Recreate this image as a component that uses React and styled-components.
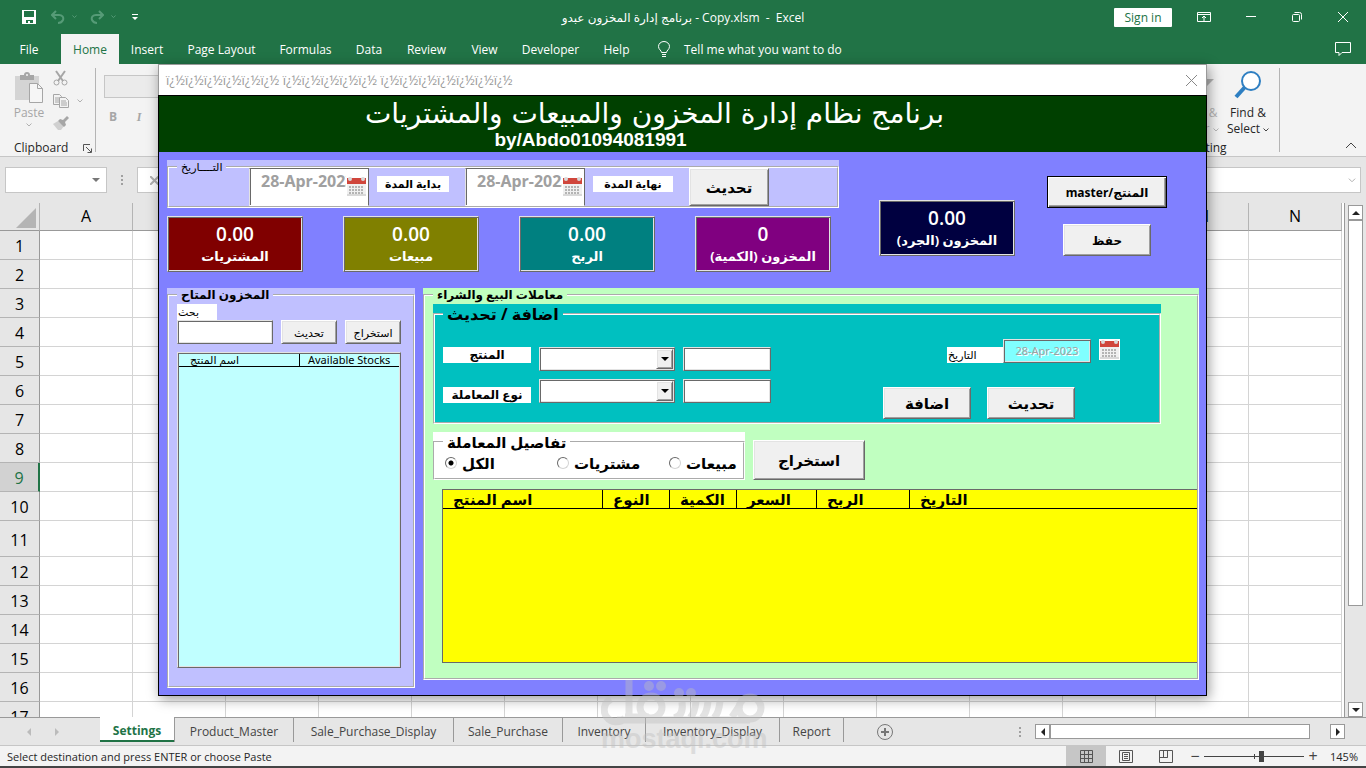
import React, { useState } from "react";
import styled, { createGlobalStyle, css } from "styled-components";

const columns = ["A", "B", "C", "D", "E", "F", "G", "H", "I", "J", "K", "L", "M", "N"];
const rows = Array.from({ length: 17 }, (_, i) => i + 1);

const ribbonTabs = [
  { name: "File", width: 58 },
  { name: "Home", width: 58, active: true },
  { name: "Insert", width: 56 },
  { name: "Page Layout", width: 93 },
  { name: "Formulas", width: 75 },
  { name: "Data", width: 52 },
  { name: "Review", width: 63 },
  { name: "View", width: 53 },
  { name: "Developer", width: 79 },
  { name: "Help", width: 53 },
];

const sheetTabs = [
  { name: "Settings", width: 75, active: true },
  { name: "Product_Master", width: 119 },
  { name: "Sale_Purchase_Display", width: 160 },
  { name: "Sale_Purchase", width: 109 },
  { name: "Inventory", width: 83 },
  { name: "Inventory_Display", width: 134 },
  { name: "Report", width: 64 },
];

const stats = [
  { value: "0.00", label: "المشتريات", color: "#800000" },
  { value: "0.00", label: "مبيعات", color: "#808000" },
  { value: "0.00", label: "الربح", color: "#008080" },
  { value: "0", label: "المخزون (الكمية)", color: "#800080" },
];

const dealColumns = [
  { name: "اسم المنتج", width: 160 },
  { name: "النوع", width: 67 },
  { name: "الكمية", width: 67 },
  { name: "السعر", width: 80 },
  { name: "الربح", width: 93 },
  { name: "التاريخ" },
];

const filters = [
  { id: "all", name: "الكل" },
  { id: "purchases", name: "مشتريات" },
  { id: "sales", name: "مبيعات" },
];

const badTitle = [6, 5, 7].map((n) => "ï¿½".repeat(n)).join(" ");

const CalendarIcon = () => (
  <svg width="21" height="21" viewBox="0 0 21 21" aria-hidden="true">
    <rect width="21" height="21" fill="#fff" />
    <rect x="1" y="8" width="19" height="11" fill="#f0f0f0" />
    <rect x="1" y="18" width="19" height="2" fill="#d9d9d9" />
    <rect x="1" y="2" width="19" height="6" fill="#d0463c" />
    <circle cx="4" cy="3" r="2" fill="#d9d9d9" />
    <circle cx="17" cy="3" r="2" fill="#d9d9d9" />
    {[10, 13, 16].map((y) =>
      [3, 6, 9, 12, 15].map((x) => (
        <rect key={x + "-" + y} x={x} y={y} width="2" height="2" fill="#b4b4b4" />
      ))
    )}
  </svg>
);

const Chevron = ({ color = "#777", up, size = 6 }) => (
  <svg width={size} height={size / 2 + 1} viewBox="0 0 6 4" aria-hidden="true">
    <path
      d={up ? "M0.5 3.5 3 1l2.5 2.5" : "M0.5 0.5 3 3l2.5-2.5"}
      fill="none"
      stroke={color}
      vectorEffect="non-scaling-stroke"
    />
  </svg>
);

const Arrow = ({ dir, color = "#222" }) => {
  const shapes = {
    up: "M0 6h8L4 2z",
    down: "M0 2h8L4 6z",
    left: "M6 0v8L2 4z",
    right: "M2 0v8l4-4z",
  };
  return (
    <svg width="8" height="8" viewBox="0 0 8 8" aria-hidden="true">
      <path d={shapes[dir]} fill={color} />
    </svg>
  );
};

const Combo = ({ id }) => (
  <ComboBox>
    <select id={id} defaultValue="">
      <option value=""></option>
    </select>
    <ComboArrow>
      <Arrow dir="down" color="#000" />
    </ComboArrow>
  </ComboBox>
);

const Stat = ({ value, label, color }) => (
  <StatBox $color={color}>
    <strong>{value}</strong>
    <span dir="rtl">{label}</span>
  </StatBox>
);

const ExcelTop = () => (
  <header>
    <TitleBar>
      <QuickAccess>
        <IconButton aria-label="Save">
          <svg width="14" height="14" viewBox="0 0 14 14">
            <path d="M0 0h14v14H0z" fill="#fff" />
            <path d="M2 1h10v6H2zM4 10h7v3H8v-2H6v2H4z" fill="#217346" />
          </svg>
        </IconButton>
        <IconButton aria-label="Undo" $left={15}>
          <svg width="14" height="14" viewBox="0 0 14 14" fill="none" stroke="#569b77" strokeWidth="2">
            <path d="M5 1 1 5l4 4M1 5h7c3 0 5 2 4 5-1 2-3 3-5 3" />
          </svg>
        </IconButton>
        <IconButton aria-label="Undo history" $left={7}>
          <Chevron color="#569b77" size={5} />
        </IconButton>
        <IconButton aria-label="Redo" $left={13}>
          <svg width="14" height="14" viewBox="0 0 14 14" fill="none" stroke="#569b77" strokeWidth="2">
            <path d="m9 1 4 4-4 4M13 5H6C3 5 1 7 2 10c1 2 3 3 5 3" />
          </svg>
        </IconButton>
        <IconButton aria-label="Redo history" $left={7}>
          <Chevron color="#569b77" size={5} />
        </IconButton>
        <IconButton aria-label="Customize" $left={16}>
          <svg width="6" height="7" viewBox="0 0 6 7" fill="#fff">
            <path d="M0 0h6v1H0zM0 3h6L3 6z" />
          </svg>
        </IconButton>
      </QuickAccess>
      <DocName>برنامج إدارة المخزون عبدو - Copy.xlsm&nbsp; -&nbsp; Excel</DocName>
      <WindowButtons>
        <SignIn>Sign in</SignIn>
        <IconButton aria-label="Ribbon display" $left={25}>
          <svg width="14" height="10" viewBox="0 0 14 10" fill="none" stroke="#fff">
            <path d="M.5.5h13v9H.5zM.5 2.5h13M7 9V4.500M5 6l2-2 2 2" />
          </svg>
        </IconButton>
        <IconButton aria-label="Minimize" $left={35}>
          <svg width="10" height="10" viewBox="0 0 10 10" stroke="#fff">
            <path d="M0 4.500h10" />
          </svg>
        </IconButton>
        <IconButton aria-label="Restore" $left={36}>
          <svg width="10" height="10" viewBox="0 0 10 10" fill="none" stroke="#fff">
            <rect x=".5" y="2.500" width="7" height="7" rx="1" />
            <path d="M2.500.5h5q2 0 2 2v5" />
          </svg>
        </IconButton>
        <IconButton aria-label="Close" $left={36}>
          <svg width="10" height="10" viewBox="0 0 10 10" stroke="#fff">
            <path d="M0 0l10 10M10 0 0 10" />
          </svg>
        </IconButton>
      </WindowButtons>
    </TitleBar>
    <TabBar>
      {ribbonTabs.map((tab) => (
        <RibbonTab key={tab.name} $width={tab.width} $active={tab.active}>
          {tab.name}
        </RibbonTab>
      ))}
      <TellMe>
        <svg width="12" height="16" viewBox="0 0 12 16" fill="none" stroke="#fff">
          <path d="M3.500 11.500c0-2-3-3-3-6a5.500 5 0 0 1 11 0c0 3-3 4-3 6zM4 13.500h4M4 15.500h4" />
        </svg>
        Tell me what you want to do
      </TellMe>
      <IconButton aria-label="Comments">
        <svg width="16" height="15" viewBox="0 0 16 15" fill="none" stroke="#fff">
          <path d="M.5.5h15v10H7l-3 3v-3H.5z" />
        </svg>
      </IconButton>
    </TabBar>
    <Ribbon>
      <ClipboardGroup>
        <GroupBody>
          <PasteButton>
            <svg width="28" height="31" viewBox="0 0 28 31">
              <path d="M0 4h24v24H0z" fill="#d4d4d4" />
              <path d="M5 8V3h4a3 3 0 0 1 6 0h4v5z" fill="#a6a6a6" />
              <circle cx="12" cy="3" r="1" fill="#f3f3f3" />
              <path d="M14.500 11.500h8l5 5v14h-13z" fill="#f6f6f6" stroke="#a6a6a6" />
              <path d="M22.500 11.500v5h5" fill="none" stroke="#a6a6a6" />
            </svg>
            Paste
            <Chevron color="#b0b0b0" />
          </PasteButton>
          <ClipTools>
            <IconButton aria-label="Cut">
              <svg width="15" height="16" viewBox="0 0 15 16" fill="none" stroke="#a6a6a6">
                <path d="M3 1l7 10M12 1 5 11" strokeWidth="2" />
                <circle cx="3.500" cy="12.500" r="2.500" />
                <circle cx="11.500" cy="12.500" r="2.500" />
              </svg>
            </IconButton>
            <CopyRow>
              <IconButton aria-label="Copy">
                <svg width="16" height="14" viewBox="0 0 16 14" fill="#f3f3f3" stroke="#a6a6a6">
                  <path d="M.5.5h6l2 2v8h-8zM2 4h4M2 6h4M2 8h4" />
                  <path d="M6.500 3.500h6l3 3v7h-9zM8 7h5M8 9h6M8 11h6" />
                </svg>
              </IconButton>
              <Chevron color="#b0b0b0" />
            </CopyRow>
            <IconButton aria-label="Format painter">
              <svg width="16" height="14" viewBox="0 0 16 14">
                <path d="M0 8l5-3 6 5-3 4H5z" fill="#d0d0d0" />
                <path d="M5 5l2-2 3 1 4-4 2 2-4 4 1 3-2 2z" fill="#a6a6a6" />
              </svg>
            </IconButton>
          </ClipTools>
        </GroupBody>
        <GroupName>
          Clipboard
          <svg width="9" height="9" viewBox="0 0 9 9" fill="none" stroke="#555">
            <path d="M.5 7V.5H7M3 3l5 5M8.500 4.500v4h-4" />
          </svg>
        </GroupName>
      </ClipboardGroup>
      <FontGroup>
        <FontBox aria-label="Font" disabled />
        <div>
          <FontButton disabled>B</FontButton>
          <FontButton disabled $italic>
            I
          </FontButton>
        </div>
      </FontGroup>
      <EditingGroup>
        <EditTools>
          <BigButton $muted>
            <svg width="28" height="28" viewBox="0 0 28 28" fill="#b5b5b5">
              <path d="M8 8h20l-8 8v8h-3v-8z" />
            </svg>
            <span>Sort &amp;</span>
            <span>
              Filter <Chevron color="#b5b5b5" />
            </span>
          </BigButton>
          <BigButton>
            <svg width="28" height="28" viewBox="0 0 28 28">
              <path d="M2 26 11 16" stroke="#2e7fc2" strokeWidth="4" />
              <circle cx="17" cy="10" r="9" fill="#fff" stroke="#2e7fc2" strokeWidth="2" />
            </svg>
            <span>Find &amp;</span>
            <span>
              Select <Chevron color="#444" />
            </span>
          </BigButton>
        </EditTools>
        <EditName>Editing</EditName>
      </EditingGroup>
      <Collapse aria-label="Collapse ribbon">
        <Chevron up color="#444" size={14} />
      </Collapse>
    </Ribbon>
    <FormulaBar>
      <NameBox>
        <input aria-label="Name box" />
        <Arrow dir="down" color="#777" />
      </NameBox>
      <Dots>
        <i />
        <i />
        <i />
      </Dots>
      <FormulaBox>
        <svg width="9" height="9" viewBox="0 0 9 9" stroke="#b0b0b0" strokeWidth="2">
          <path d="M0 0l9 9M9 0 0 9" />
        </svg>
        <input aria-label="Formula" />
        <Chevron color="#b0b0b0" size={8} />
      </FormulaBox>
    </FormulaBar>
  </header>
);

const Sheet = () => (
  <SheetArea>
    <SheetClip>
      <SheetTable>
        <thead>
          <tr>
            <CornerCell>
              <svg width="20" height="20" viewBox="0 0 20 20">
                <path d="M20 0v20H0z" fill="#b4b4b4" />
              </svg>
            </CornerCell>
            {columns.map((c) => (
              <ColHead key={c}>{c}</ColHead>
            ))}
          </tr>
        </thead>
        <tbody>
          {rows.map((r) => (
            <SheetRow key={r} $tall={r === 11}>
              <RowHead $active={r === 9}>{r}</RowHead>
              {columns.map((c) => (
                <Cell key={c} />
              ))}
            </SheetRow>
          ))}
        </tbody>
      </SheetTable>
    </SheetClip>
    <VScroll>
      <ScrollButton aria-label="Scroll up">
        <Arrow dir="up" />
      </ScrollButton>
      <VThumb />
      <ScrollButton aria-label="Scroll down">
        <Arrow dir="down" />
      </ScrollButton>
    </VScroll>
  </SheetArea>
);

const ExcelBottom = () => (
  <footer>
    <SheetTabs>
      <TabArrows>
        <Arrow dir="left" color="#bbb" />
        <Arrow dir="right" color="#bbb" />
      </TabArrows>
      {sheetTabs.map((tab) => (
        <SheetTab key={tab.name} $width={tab.width} $active={tab.active}>
          {tab.name}
        </SheetTab>
      ))}
      <AddSheet aria-label="New sheet">
        <svg width="16" height="16" viewBox="0 0 16 16" fill="none" stroke="#777">
          <circle cx="8" cy="8" r="7.500" />
          <path d="M8 4v8M4 8h8" strokeWidth="2" />
        </svg>
      </AddSheet>
      <Dots>
        <i />
        <i />
        <i />
      </Dots>
      <HScroll>
        <ScrollButton aria-label="Scroll left">
          <Arrow dir="left" />
        </ScrollButton>
        <HThumb />
        <ScrollButton aria-label="Scroll right">
          <Arrow dir="right" />
        </ScrollButton>
      </HScroll>
    </SheetTabs>
    <StatusBar>
      <StatusText>Select destination and press ENTER or choose Paste</StatusText>
      <ViewButton aria-label="Normal" $active>
        <svg width="13" height="13" viewBox="0 0 13 13" fill="none" stroke="#555">
          <path d="M.5.5h12v12H.5zM4.500 0v13M8.500 0v13M0 4.500h13M0 8.500h13" />
        </svg>
      </ViewButton>
      <ViewButton aria-label="Page layout">
        <svg width="14" height="13" viewBox="0 0 14 13" fill="none" stroke="#555">
          <path d="M.5.5h13v12H.5zM3.500 2.500h7v8h-7zM5 4.500h4M5 6.500h4M5 8.500h4" />
        </svg>
      </ViewButton>
      <ViewButton aria-label="Page break">
        <svg width="14" height="13" viewBox="0 0 14 13" fill="none" stroke="#555">
          <path d="M.5.5h13v12H.5zM4.500.5v7h4v-7M.5 7.500h8" />
        </svg>
      </ViewButton>
      <ZoomButton>−</ZoomButton>
      <ZoomRange type="range" aria-label="Zoom" defaultValue="58" />
      <ZoomButton>+</ZoomButton>
      <ZoomValue>145%</ZoomValue>
    </StatusBar>
  </footer>
);

const Inventory = () => {
  const [filter, setFilter] = useState("all");

  return (
    <Dialog role="dialog" aria-label="Inventory">
      <DialogTitle>
        <span>{badTitle}</span>
        <IconButton aria-label="Close form">
          <svg width="11" height="11" viewBox="0 0 11 11" stroke="#888">
            <path d="M0 0l11 11M11 0 0 11" />
          </svg>
        </IconButton>
      </DialogTitle>
      <DialogBody>
        <Banner>
          <h1 dir="rtl">برنامج نظام إدارة المخزون والمبيعات والمشتريات</h1>
          <p>by/Abdo01094081991</p>
        </Banner>
        <TopArea>
          <div>
            <Panel $color="#c0c0ff">
              <DateFrame>
                <legend>التــــاريخ</legend>
                <DateRow>
                  <DateField>
                    <input id="from" defaultValue="28-Apr-2023" readOnly />
                    <CalendarIcon />
                  </DateField>
                  <Tag htmlFor="from" $width={72} $top>
                    بداية المدة
                  </Tag>
                  <DateField $gap>
                    <input id="to" defaultValue="28-Apr-2023" readOnly />
                    <CalendarIcon />
                  </DateField>
                  <Tag htmlFor="to" $width={80} $top>
                    نهاية المدة
                  </Tag>
                  <FrameButton>تحديث</FrameButton>
                </DateRow>
              </DateFrame>
            </Panel>
            <StatRow>
              {stats.map((s) => (
                <Stat key={s.label} {...s} />
              ))}
            </StatRow>
          </div>
          <CountStat>
            <Stat value="0.00" label="المخزون (الجرد)" color="#000040" />
          </CountStat>
          <SideButtons>
            <MasterButton $width={120} $height={32} $size={12}>
              master/المنتج
            </MasterButton>
            <FormButton $width={88} $height={32} $size={12}>
              حفظ
            </FormButton>
          </SideButtons>
        </TopArea>
        <BottomArea>
          <Panel $color="#c0c0ff">
            <StockFrame>
              <legend>المخزون المتاح</legend>
              <SearchLabel htmlFor="search">بحث</SearchLabel>
              <SearchRow>
                <TextBox id="search" $width={96} />
                <FormButton $width={56} $height={24} $size={11} $plain>
                  تحديث
                </FormButton>
                <FormButton $width={56} $height={24} $size={11} $plain>
                  استخراج
                </FormButton>
              </SearchRow>
              <StockList>
                <table>
                  <thead>
                    <tr>
                      <th>اسم المنتج</th>
                      <th>Available Stocks</th>
                    </tr>
                  </thead>
                </table>
              </StockList>
            </StockFrame>
          </Panel>
          <DealPanel $color="#c0ffc0">
            <DealFrame>
              <legend>معاملات البيع والشراء</legend>
              <EditPanel $color="#00c0c0">
                <EditFrame>
                  <legend>اضافة / تحديث</legend>
                  <EditRow>
                    <EditGrid>
                      <Tag htmlFor="product" $width={88}>
                        المنتج
                      </Tag>
                      <Combo id="product" />
                      <TextBox aria-label="المنتج" $width={88} />
                      <Tag htmlFor="kind" $width={88} $end>
                        نوع المعاملة
                      </Tag>
                      <Combo id="kind" />
                      <TextBox aria-label="نوع المعاملة" $width={88} />
                    </EditGrid>
                    <EditSide>
                      <DealDate>
                        <label htmlFor="date">التاريخ</label>
                        <TextBox id="date" $width={88} $dim defaultValue="28-Apr-2023" readOnly />
                        <CalendarIcon />
                      </DealDate>
                      <ButtonRow>
                        <FormButton $width={88} $height={32} $size={15}>
                          اضافة
                        </FormButton>
                        <FormButton $width={88} $height={32} $size={15}>
                          تحديث
                        </FormButton>
                      </ButtonRow>
                    </EditSide>
                  </EditRow>
                </EditFrame>
              </EditPanel>
              <FilterRow>
                <FilterPanel $color="#fff">
                  <FilterFrame>
                    <legend>تفاصيل المعاملة</legend>
                    <Radios>
                      {filters.map((f) => (
                        <label key={f.id}>
                          <input
                            type="radio"
                            name="filter"
                            checked={filter === f.id}
                            onChange={() => setFilter(f.id)}
                          />
                          {f.name}
                        </label>
                      ))}
                    </Radios>
                  </FilterFrame>
                </FilterPanel>
                <FormButton $width={112} $height={40} $size={15}>
                  استخراج
                </FormButton>
              </FilterRow>
              <DealList>
                <table>
                  <colgroup>
                    {dealColumns.map((c) => (
                      <col key={c.name} width={c.width} />
                    ))}
                  </colgroup>
                  <thead>
                    <tr>
                      {dealColumns.map((c) => (
                        <th key={c.name}>{c.name}</th>
                      ))}
                    </tr>
                  </thead>
                </table>
              </DealList>
            </DealFrame>
          </DealPanel>
        </BottomArea>
      </DialogBody>
    </Dialog>
  );
};

const App = () => (
  <React.Fragment>
    <GlobalStyle />
    <Page>
      <ExcelTop />
      <Sheet />
      <ExcelBottom />
      <Inventory />
      <Watermark aria-hidden="true">
        <svg width="164" height="46" viewBox="0 0 164 46" fill="none" stroke="currentColor" strokeWidth="7">
          <path d="M10 19a12 12 0 1 0 14 19M28 0v36M16 40h133" />
          <path d="M24 37h24M95 21q-1 12-6 17M107 21q-1 12-6 17M119 21q-1 12-6 17M131 37l8-12M81 22q2 14-8 16" />
          <circle cx="50" cy="27" r="11" />
          <circle cx="149" cy="28" r="11" />
          <g fill="currentColor" stroke="none">
            <circle cx="48" cy="6" r="5" />
            <circle cx="60" cy="6" r="5" />
            <circle cx="78" cy="13" r="5" />
            <circle cx="90" cy="13" r="5" />
          </g>
        </svg>
        <span>mostaql.com</span>
      </Watermark>
    </Page>
  </React.Fragment>
);

const ui = `"Open Sans", "DejaVu Sans", sans-serif`;
const form = `"Noto Sans", "DejaVu Sans", sans-serif`;

const GlobalStyle = createGlobalStyle`
  * {
    box-sizing: border-box;
  }
  body {
    margin: 0;
    font-family: ${ui};
    font-size: 12px;
    color: #262626;
  }
  button, input, select {
    font-family: inherit;
    font-size: inherit;
    color: inherit;
    margin: 0;
    padding: 0;
  }
  svg {
    display: block;
    flex: none;
  }
`;

/* two pixel edges of the classic form controls */
const sunken = css`
  border: 1px solid;
  border-color: #e3e3e3 #696969 #696969 #e3e3e3;
  box-shadow: inset 1px 1px 0 #696969, inset -1px -1px 0 #e3e3e3;
`;

const raised = css`
  background: #f0f0f0;
  border: 1px solid;
  border-color: #fff #696969 #696969 #fff;
  box-shadow: inset 1px 1px 0 #e3e3e3, inset -1px -1px 0 #a0a0a0;
`;

const Page = styled.div`
  position: relative;
  display: flex;
  flex-direction: column;
  height: 100vh;
  min-height: 768px;
  overflow: hidden;
  background: #e6e6e6;
`;

const IconButton = styled.button`
  display: flex;
  border: 0;
  background: none;
  margin-left: ${(p) => p.$left || 0}px;
`;

const TitleBar = styled.div`
  display: grid;
  grid-template-columns: 1fr auto 1fr;
  align-items: center;
  height: 34px;
  background: #217346;
  color: #fff;
`;

const QuickAccess = styled.div`
  display: flex;
  align-items: center;
  padding-left: 22px;
`;

const DocName = styled.div`
  font-size: 12px;
`;

const WindowButtons = styled.div`
  display: flex;
  align-items: center;
  justify-content: flex-end;
  padding-right: 18px;
  height: 30px;
`;

const SignIn = styled.button`
  width: 58px;
  height: 19px;
  border: 0;
  border-radius: 1px;
  background: #fff;
  color: #217346;
  font-size: 12px;
`;

const TabBar = styled.nav`
  display: flex;
  align-items: center;
  height: 30px;
  padding-right: 15px;
  background: #217346;
  color: #fff;
`;

const RibbonTab = styled.button`
  width: ${(p) => p.$width}px;
  height: 30px;
  border: 0;
  background: ${(p) => (p.$active ? "#f3f3f3" : "none")};
  color: ${(p) => (p.$active ? "#217346" : "#fff")};
  white-space: nowrap;
  &:first-child {
    margin-right: 3px;
  }
`;

const TellMe = styled.div`
  display: flex;
  align-items: center;
  gap: 14px;
  flex: 1;
  padding-left: 15px;
`;

const Ribbon = styled.div`
  display: flex;
  height: 93px;
  padding: 4px 0;
  background: #f3f3f3;
  border-bottom: 1px solid #c6c6c6;
`;

const ClipboardGroup = styled.div`
  width: 96px;
  border-right: 1px solid #b4b4b4;
`;

const GroupBody = styled.div`
  display: flex;
  gap: 10px;
  height: 70px;
  padding-left: 15px;
`;

const PasteButton = styled.button`
  display: flex;
  flex-direction: column;
  align-items: center;
  width: 28px;
  padding-top: 4px;
  border: 0;
  background: none;
  color: #a6a6a6;
  line-height: 20px;
`;

const ClipTools = styled.div`
  display: flex;
  flex-direction: column;
  gap: 8px;
  padding-top: 2px;
`;

const CopyRow = styled.div`
  display: flex;
  align-items: center;
  gap: 8px;
`;

const GroupName = styled.div`
  display: flex;
  align-items: center;
  justify-content: space-between;
  padding: 2px 3px 0 14px;
  line-height: 16px;
`;

const FontGroup = styled.div`
  flex: 1;
  padding: 7px 0 0 8px;
`;

const FontBox = styled.input`
  display: block;
  width: 160px;
  height: 23px;
  border: 1px solid #c6c6c6;
  background: #ebebeb;
`;

const FontButton = styled.button`
  width: 18px;
  height: 20px;
  margin: 8px 8px 0 0;
  border: 0;
  background: none;
  color: #a6a6a6;
  font-weight: bold;
  font-style: ${(p) => (p.$italic ? "italic" : "normal")};
  font-family: ${(p) => (p.$italic ? `"Liberation Serif", serif` : "inherit")};
`;

const EditingGroup = styled.div`
  width: 144px;
  border-right: 1px solid #b4b4b4;
`;

const EditTools = styled.div`
  display: flex;
  justify-content: flex-end;
  gap: 4px;
  height: 70px;
  padding: 3px 9px 0 0;
`;

const BigButton = styled.button`
  display: flex;
  flex-direction: column;
  align-items: center;
  width: 44px;
  border: 0;
  background: none;
  color: ${(p) => (p.$muted ? "#b5b5b5" : "#262626")};
  line-height: 16px;
  white-space: nowrap;
  svg {
    display: inline-block;
    vertical-align: middle;
  }
  span:first-of-type {
    margin-top: 6px;
  }
`;

const EditName = styled.div`
  padding-top: 2px;
  line-height: 16px;
  text-align: center;
`;

const Collapse = styled.button`
  align-self: flex-end;
  width: 86px;
  height: 14px;
  padding-left: 64px;
  border: 0;
  background: none;
`;

const FormulaBar = styled.div`
  display: flex;
  align-items: center;
  height: 46px;
  padding: 0 5px;
`;

const NameBox = styled.div`
  display: flex;
  align-items: center;
  width: 102px;
  height: 26px;
  padding-right: 6px;
  border: 1px solid #c6c6c6;
  background: #fff;
  input {
    flex: 1;
    min-width: 0;
    border: 0;
    outline: 0;
  }
`;

const Dots = styled.div`
  display: grid;
  gap: 2px;
  place-content: center;
  width: 30px;
  i {
    width: 2px;
    height: 2px;
    background: #a0a0a0;
  }
`;

const FormulaBox = styled(NameBox)`
  flex: 1;
  padding: 0 4px 0 12px;
`;

const SheetArea = styled.div`
  display: flex;
  flex: 1;
  min-height: 0;
`;

const SheetClip = styled.div`
  flex: 1;
  overflow: hidden;
  border-right: 1px solid #999;
`;

const SheetTable = styled.table`
  table-layout: fixed;
  width: 1342px;
  border-collapse: separate;
  border-spacing: 0;
  font-size: 16px;
  box-shadow: 2px 0 0 #fff;
`;

const CornerCell = styled.th`
  width: 40px;
  height: 28px;
  padding: 2px 3px 0 16px;
  border-right: 1px solid #b4b4b4;
  border-bottom: 1px solid #999;
`;

const ColHead = styled.th`
  width: 93px;
  height: 28px;
  padding: 0;
  font-weight: normal;
  line-height: 27px;
  color: #000;
  background: #e6e6e6;
  border-right: 1px solid #b4b4b4;
  border-bottom: 1px solid #999;
`;

const SheetRow = styled.tr`
  height: ${(p) => (p.$tall ? 36 : 29)}px;
`;

const RowHead = styled.th`
  padding: 2px 0 0;
  font-weight: normal;
  line-height: 24px;
  color: ${(p) => (p.$active ? "#217346" : "#000")};
  background: ${(p) => (p.$active ? "#d2d2d2" : "#e6e6e6")};
  border-right: ${(p) => (p.$active ? "2px solid #217346" : "1px solid #999")};
  border-bottom: 1px solid #b4b4b4;
`;

const Cell = styled.td`
  padding: 0;
  background: #fff;
  border-right: 1px solid #d4d4d4;
  border-bottom: 1px solid #d4d4d4;
`;

const VScroll = styled.div`
  display: flex;
  flex-direction: column;
  justify-content: space-between;
  width: 21px;
  padding: 2px 3px 0;
`;

const ScrollButton = styled.button`
  display: flex;
  align-items: center;
  justify-content: center;
  flex: none;
  width: 15px;
  height: 15px;
  border: 1px solid #999;
  background: #fff;
`;

const VThumb = styled.div`
  height: 386px;
  margin-bottom: auto;
  border: 1px solid #999;
  background: #fff;
`;

const SheetTabs = styled.div`
  display: flex;
  height: 28px;
  padding-right: 21px;
  border-top: 1px solid #999;
`;

const TabArrows = styled.div`
  display: flex;
  align-items: center;
  gap: 20px;
  width: 100px;
  padding-left: 25px;
`;

const SheetTab = styled.button`
  width: ${(p) => p.$width}px;
  height: ${(p) => (p.$active ? 25 : 24)}px;
  margin-top: ${(p) => (p.$active ? -1 : 0)}px;
  padding-top: 2px;
  border: 0;
  border-right: 1px solid #999;
  background: ${(p) => (p.$active ? "#fff" : "none")};
  box-shadow: ${(p) => (p.$active ? "inset 0 -2px 0 #217346" : "none")};
  color: ${(p) => (p.$active ? "#217346" : "#444")};
  font-size: 12px;
  font-weight: ${(p) => (p.$active ? "bold" : "normal")};
  white-space: nowrap;
`;

const AddSheet = styled(IconButton)`
  flex: 1;
  align-items: center;
  padding-left: 33px;
`;

const HScroll = styled.div`
  display: flex;
  align-items: center;
  justify-content: space-between;
  width: 310px;
`;

const HThumb = styled.div`
  width: 260px;
  height: 15px;
  margin-right: auto;
  border: 1px solid #999;
  background: #fff;
`;

const StatusBar = styled.div`
  display: flex;
  align-items: center;
  height: 23px;
  padding: 0 8px 0 7px;
  background: #f3f3f3;
  border-top: 1px solid #c6c6c6;
  border-bottom: 2px solid #444;
`;

const StatusText = styled.div`
  flex: 1;
  font-size: 11px;
`;

const ViewButton = styled.button`
  display: flex;
  align-items: center;
  justify-content: center;
  width: 40px;
  height: 20px;
  border: 0;
  background: ${(p) => (p.$active ? "#c6c6c6" : "none")};
`;

const ZoomButton = styled.button`
  width: 18px;
  border: 0;
  background: none;
  color: #444;
  font-size: 16px;
  line-height: 18px;
`;

const ZoomRange = styled.input`
  appearance: none;
  width: 100px;
  height: 12px;
  background: linear-gradient(#444, #444) center / 100% 1px no-repeat,
    linear-gradient(#444, #444) center / 1px 5px no-repeat;
  &::-webkit-slider-thumb {
    appearance: none;
    width: 5px;
    height: 11px;
    background: #444;
  }
`;

const ZoomValue = styled.div`
  width: 36px;
  font-size: 11px;
  text-align: right;
`;

const Dialog = styled.div`
  position: absolute;
  top: 64px;
  left: 158px;
  right: 159px;
  font-family: ${form};
  color: #000;
  box-shadow: 2px 3px 12px rgba(0, 0, 0, 0.4);
`;

const DialogTitle = styled.div`
  display: flex;
  align-items: center;
  justify-content: space-between;
  height: 31px;
  padding: 0 9px 0 7px;
  border: 1px solid #999;
  border-bottom: 0;
  background: #fff;
  color: #999;
  font-family: ${ui};
  font-size: 13px;
`;

const DialogBody = styled.div`
  border: 1px solid #000;
  background: #8080ff;
`;

const Banner = styled.div`
  height: 56px;
  background: #004000;
  color: #fff;
  text-align: center;
  h1 {
    margin: 0;
    padding-right: 56px;
    font-family: "DejaVu Sans", sans-serif;
    font-size: 28px;
    font-weight: normal;
    line-height: 36px;
  }
  p {
    margin: 0;
    padding-right: 184px;
    font-family: "Liberation Sans", sans-serif;
    font-size: 19px;
    font-weight: bold;
    line-height: 16px;
  }
`;

const TopArea = styled.div`
  display: flex;
  height: 136px;
  padding: 8px 8px 0;
`;

const Panel = styled.div`
  background: ${(p) => p.$color};
`;

const Frame = styled.fieldset`
  min-width: 0;
  margin: 0;
  padding: 0;
  border: 2px groove #fff;
  legend {
    margin-left: 8px;
    padding: 0 4px;
    font-size: 12px;
    line-height: 14px;
    font-weight: bold;
  }
`;

const DateFrame = styled(Frame)`
  width: 672px;
  height: 48px;
  legend {
    font-size: 11px;
    font-weight: normal;
  }
`;

const DateRow = styled.div`
  display: flex;
  gap: 8px;
  height: 38px;
  margin-top: -6px;
  padding-left: 80px;
`;

const DateField = styled.div`
  position: relative;
  margin-left: ${(p) => (p.$gap ? 8 : 0)}px;
  input {
    width: 120px;
    height: 38px;
    padding: 0 22px 12px 11px;
    border: 1px solid;
    border-color: #696969 #696969 transparent #e3e3e3;
    box-shadow: inset 1px 0 0 #696969;
    background: #fff;
    color: #a0a0a0;
    font-size: 16px;
    font-weight: bold;
  }
  svg {
    position: absolute;
    top: 8px;
    right: 2px;
  }
`;

const Tag = styled.label`
  align-self: ${(p) => (p.$end ? "flex-end" : "flex-start")};
  width: ${(p) => p.$width}px;
  height: 16px;
  margin-top: ${(p) => (p.$top ? 8 : 0)}px;
  background: #fff;
  font-size: ${(p) => (p.$top ? 11 : 12)}px;
  font-weight: bold;
  line-height: 16px;
  text-align: center;
  overflow: hidden;
`;

const FormButton = styled.button`
  ${raised}
  width: ${(p) => p.$width}px;
  height: ${(p) => p.$height}px;
  color: #000;
  font-size: ${(p) => p.$size}px;
  font-weight: ${(p) => (p.$plain ? "normal" : "bold")};
`;

const MasterButton = styled(FormButton)`
  border-color: #000;
  box-shadow: inset 1px 1px 0 #fff, inset -1px -1px 0 #696969, inset -2px -2px 0 #a0a0a0;
`;

const FrameButton = styled.button`
  ${raised}
  width: 80px;
  height: 38px;
  margin-left: 8px;
  font-size: 15px;
  font-weight: bold;
`;

const StatRow = styled.div`
  display: flex;
  gap: 40px;
  margin-top: 8px;
`;

const StatBox = styled.div`
  ${sunken}
  display: flex;
  flex-direction: column;
  align-items: center;
  width: 136px;
  height: 56px;
  padding-top: 5px;
  background: ${(p) => p.$color};
  color: #fff;
  font-weight: bold;
  strong {
    font-family: ${ui};
    font-size: 19px;
    font-weight: 600;
    line-height: 24px;
  }
  span {
    font-size: 13px;
    line-height: 20px;
  }
`;

const CountStat = styled.div`
  margin: 40px 32px 0 40px;
`;

const SideButtons = styled.div`
  display: flex;
  flex-direction: column;
  align-items: center;
  gap: 16px;
  padding-top: 16px;
`;

const BottomArea = styled.div`
  display: flex;
  align-items: flex-start;
  gap: 8px;
  padding: 0 7px 7px 8px;
`;

const StockFrame = styled(Frame)`
  width: 248px;
  height: 400px;
  padding: 2px 12px 0 8px;
  > legend {
    margin-left: 0;
  }
`;

const SearchLabel = styled.label`
  display: block;
  width: 40px;
  height: 16px;
  padding-left: 1px;
  background: #fff;
  font-size: 11px;
  line-height: 15px;
`;

const SearchRow = styled.div`
  display: flex;
  gap: 8px;
`;

const TextBox = styled.input`
  ${sunken}
  width: ${(p) => p.$width}px;
  height: 24px;
  padding: ${(p) => (p.$dim ? "0 2px 2px" : "0 4px")};
  background: ${(p) => (p.$dim ? "#80ffff" : "#fff")};
  color: ${(p) => (p.$dim ? "#a0a0a0" : "#000")};
  font-size: 11px;
  text-align: ${(p) => (p.$dim ? "center" : "left")};
  text-shadow: ${(p) => (p.$dim ? "1px 1px 0 #fff" : "none")};
`;

const StockList = styled.div`
  ${sunken}
  height: 316px;
  margin-top: 8px;
  padding: 1px;
  background: #c0ffff;
  table {
    width: 100%;
    border-collapse: separate;
    border-spacing: 0;
    table-layout: fixed;
  }
  th {
    height: 13px;
    padding: 0 0 0 8px;
    border-bottom: 1px solid #000;
    font-size: 11px;
    font-weight: normal;
    line-height: 12px;
    text-align: left;
    white-space: nowrap;
  }
  th:first-child {
    width: 121px;
    padding-left: 11px;
    border-right: 1px solid #000;
  }
`;

const DealPanel = styled(Panel)`
  flex: 1;
`;

const DealFrame = styled(Frame)`
  height: 392px;
  padding: 2px 0 0 8px;
  > legend {
    margin-left: 0;
  }
`;

const EditPanel = styled(Panel)`
  margin-right: 36px;
`;

const EditFrame = styled(Frame)`
  height: 120px;
  legend {
    font-size: 16px;
    line-height: 20px;
  }
`;

const EditRow = styled.div`
  display: flex;
  justify-content: space-between;
  padding: 15px 39px 0 8px;
`;

const EditGrid = styled.div`
  display: grid;
  grid-template-columns: 88px 136px 88px;
  grid-auto-rows: 24px;
  gap: 8px;
  padding-top: 8px;
`;

const ComboBox = styled.div`
  position: relative;
  select {
    ${sunken}
    appearance: none;
    width: 136px;
    height: 24px;
    padding: 0 20px 0 4px;
    background: #fff;
    border-radius: 0;
  }
`;

const ComboArrow = styled.span`
  ${raised}
  position: absolute;
  top: 2px;
  right: 2px;
  display: flex;
  align-items: center;
  justify-content: center;
  width: 17px;
  height: 20px;
  pointer-events: none;
`;

const EditSide = styled.div`
  display: flex;
  flex-direction: column;
  gap: 24px;
`;

const DealDate = styled.div`
  display: flex;
  justify-content: flex-end;
  padding-left: 64px;
  label {
    align-self: flex-end;
    width: 56px;
    height: 16px;
    padding-left: 1px;
    background: #fff;
    font-size: 11px;
    line-height: 15px;
  }
  svg {
    margin-left: 8px;
  }
`;

const ButtonRow = styled.div`
  display: flex;
  gap: 16px;
`;

const FilterRow = styled.div`
  display: flex;
  align-items: flex-end;
  gap: 8px;
  margin-top: 8px;
`;

const FilterPanel = styled(Panel)`
  width: 312px;
`;

const FilterFrame = styled(Frame)`
  height: 48px;
  legend {
    font-size: 15px;
    line-height: 20px;
  }
`;

const Radios = styled.div`
  display: grid;
  grid-template-columns: 112px 112px auto;
  padding-left: 10px;
  label {
    display: flex;
    align-items: center;
    gap: 5px;
    height: 22px;
    font-size: 15px;
    font-weight: bold;
    white-space: nowrap;
  }
  input {
    appearance: none;
    width: 12px;
    height: 12px;
    border: 1px solid;
    border-color: #696969 #d4d4d4 #d4d4d4 #696969;
    border-radius: 50%;
    background: #fff;
  }
  input:checked {
    background: radial-gradient(circle, #000 2px, #fff 3px);
  }
`;

const DealList = styled.div`
  height: 174px;
  margin: 9px 0 0 9px;
  border: 1px solid #696969;
  border-right: 0;
  background: #ff0;
  table {
    width: 100%;
    border-collapse: separate;
    border-spacing: 0;
    table-layout: fixed;
  }
  th {
    height: 19px;
    padding: 0 0 0 10px;
    border-right: 1px solid #000;
    border-bottom: 1px solid #000;
    font-size: 15px;
    line-height: 18px;
    text-align: left;
    white-space: nowrap;
  }
  th:last-child {
    border-right: 0;
  }
`;

const Watermark = styled.div`
  position: absolute;
  left: 601px;
  top: 680px;
  color: #bebebe;
  opacity: 0.42;
  pointer-events: none;
  span {
    display: block;
    font-family: "Liberation Sans", sans-serif;
    font-size: 27px;
    font-weight: bold;
    line-height: 26px;
  }
`;

export default App;
